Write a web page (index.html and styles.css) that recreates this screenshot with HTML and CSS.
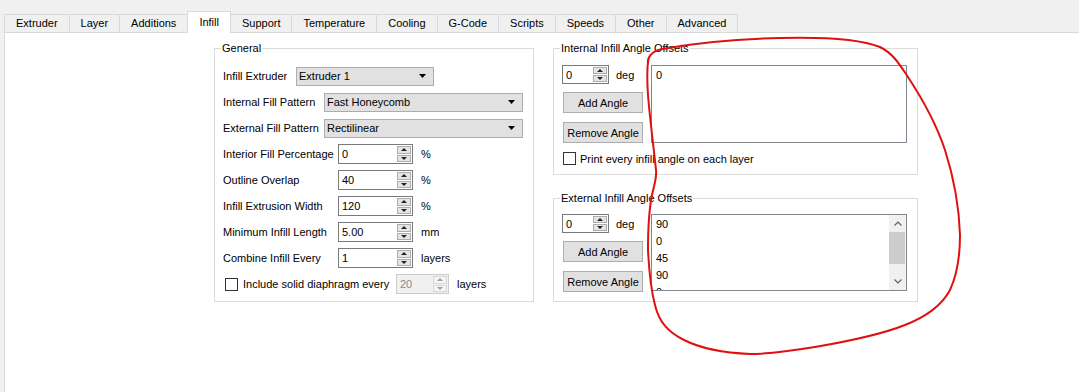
FILE: index.html
```html
<!DOCTYPE html>
<html lang="en">
<head>
  <meta charset="UTF-8">
  <title>Infill</title>
  <link rel="stylesheet" href="styles.css">
</head>
<body>
  <div class="tabbar">
    <div class="tab">Extruder</div>
    <div class="tab">Layer</div>
    <div class="tab">Additions</div>
    <div class="tab active">Infill</div>
    <div class="tab">Support</div>
    <div class="tab">Temperature</div>
    <div class="tab">Cooling</div>
    <div class="tab">G-Code</div>
    <div class="tab">Scripts</div>
    <div class="tab">Speeds</div>
    <div class="tab">Other</div>
    <div class="tab">Advanced</div>
  </div>

  <div class="pane">
    <!-- General -->
    <div class="group general">
      <div class="group-title">General</div>
      <div class="rows">
        <div class="row">
          <span class="lbl lbl-a">Infill Extruder</span>
          <div class="combo combo-s">Extruder 1<svg class="caret" width="7" height="4"><path d="M0 0h7l-3.5 4z"/></svg></div>
        </div>
        <div class="row">
          <span class="lbl lbl-b">Internal Fill Pattern</span>
          <div class="combo combo-l">Fast Honeycomb<svg class="caret" width="7" height="4"><path d="M0 0h7l-3.5 4z"/></svg></div>
        </div>
        <div class="row">
          <span class="lbl lbl-b">External Fill Pattern</span>
          <div class="combo combo-l">Rectilinear<svg class="caret" width="7" height="4"><path d="M0 0h7l-3.5 4z"/></svg></div>
        </div>
        <div class="row">
          <span class="lbl lbl-c">Interior Fill Percentage</span>
          <div class="spin spin-w"><span class="spin-val">0</span><span class="spin-btns"><i class="up"></i><i class="dn"></i></span></div>
          <span class="unit">%</span>
        </div>
        <div class="row">
          <span class="lbl lbl-c">Outline Overlap</span>
          <div class="spin spin-w"><span class="spin-val">40</span><span class="spin-btns"><i class="up"></i><i class="dn"></i></span></div>
          <span class="unit">%</span>
        </div>
        <div class="row">
          <span class="lbl lbl-c">Infill Extrusion Width</span>
          <div class="spin spin-w"><span class="spin-val">120</span><span class="spin-btns"><i class="up"></i><i class="dn"></i></span></div>
          <span class="unit">%</span>
        </div>
        <div class="row">
          <span class="lbl lbl-c">Minimum Infill Length</span>
          <div class="spin spin-w"><span class="spin-val">5.00</span><span class="spin-btns"><i class="up"></i><i class="dn"></i></span></div>
          <span class="unit">mm</span>
        </div>
        <div class="row">
          <span class="lbl lbl-c">Combine Infill Every</span>
          <div class="spin spin-w"><span class="spin-val">1</span><span class="spin-btns"><i class="up"></i><i class="dn"></i></span></div>
          <span class="unit">layers</span>
        </div>
        <div class="row">
          <span class="check"></span>
          <span class="lbl lbl-d">Include solid diaphragm every</span>
          <div class="spin spin-d disabled"><span class="spin-val">20</span><span class="spin-btns"><i class="up"></i><i class="dn"></i></span></div>
          <span class="unit">layers</span>
        </div>
      </div>
    </div>

    <div class="col">
      <!-- Internal -->
      <div class="group internal">
        <div class="group-title">Internal Infill Angle Offsets</div>
        <div class="angles">
          <div class="angle-ctrl">
            <div class="deg-row">
              <div class="spin spin-a"><span class="spin-val">0</span><span class="spin-btns"><i class="up"></i><i class="dn"></i></span></div>
              <span class="unit">deg</span>
            </div>
            <div class="btn btn-first">Add Angle</div>
            <div class="btn">Remove Angle</div>
          </div>
          <div class="list list-in">
            <div class="items"><div>0</div></div>
          </div>
        </div>
        <div class="check-row">
          <span class="check"></span>
          <span>Print every infill angle on each layer</span>
        </div>
      </div>

      <!-- External -->
      <div class="group external">
        <div class="group-title">External Infill Angle Offsets</div>
        <div class="angles">
          <div class="angle-ctrl">
            <div class="deg-row">
              <div class="spin spin-a"><span class="spin-val">0</span><span class="spin-btns"><i class="up"></i><i class="dn"></i></span></div>
              <span class="unit">deg</span>
            </div>
            <div class="btn btn-first">Add Angle</div>
            <div class="btn">Remove Angle</div>
          </div>
          <div class="list list-ex">
            <div class="items">
              <div>90</div>
              <div>0</div>
              <div>45</div>
              <div>90</div>
              <div>0</div>
            </div>
            <div class="sbar">
              <div class="sb-btn"><svg width="8" height="5"><path d="M0.5 4.5L4 1l3.5 3.5" fill="none" stroke="#606060" stroke-width="1.2"/></svg></div>
              <div class="sb-track"><div class="sb-thumb"></div></div>
              <div class="sb-btn"><svg width="8" height="5"><path d="M0.5 0.5L4 4l3.5-3.5" fill="none" stroke="#606060" stroke-width="1.2"/></svg></div>
            </div>
          </div>
        </div>
      </div>
    </div>
  </div>

  <!-- red marker scribble over the screenshot -->
  <svg class="scribble" width="1079" height="392" viewBox="0 0 1079 392">
    <path d="M648 64 C647 57 652 51 662 49 C690 44 730 39 780 38 C820 37 860 39 880 47 C892 53 898 62 906 74 C920 95 935 120 945 150 C953 175 959 205 960 235 C960 258 957 275 950 290 C942 305 928 316 905 325 C880 335 850 341 815 347 C790 351 770 354 750 354 C725 353 700 348 684 340 C668 332 659 322 655 305 C651 290 649 270 648 250 C648 230 649 210 652 195 C654 185 657 178 656 170 C654 150 650 120 648 95 C647 80 647 70 648 62"/>
  </svg>
</body>
</html>
```

FILE: styles.css
```css
*{
  margin: 0;
  padding: 0;
  box-sizing: border-box;
}

body{
  width: 1079px;
  height: 392px;
  overflow: hidden;
  background: #f0f0f0;
  font-family: "Liberation Sans", Arial, sans-serif;
  font-size: 11px;
  color: #000;
}

/* tabs */
.tabbar{
  height: 32px;
  display: flex;
  align-items: flex-end;
  padding-left: 4px;
}
.tab{
  height: 18px;
  line-height: 17px;
  padding: 0 11px;
  border: 1px solid #d9d9d9;
  border-bottom: none;
  margin-left: -1px;
  background: #f0f0f0;
}
.tab:first-child{
  margin-left: 0;
}
.tab.active{
  height: 22px;
  line-height: 20px;
  margin-bottom: -1px;
  background: #fff;
  position: relative;
  z-index: 1;
}

.pane{
  height: 360px;
  margin-left: 4px;
  border-top: 1px solid #d9d9d9;
  border-left: 1px solid #d9d9d9;
  background: #fff;
  display: flex;
  align-items: flex-start;
  padding: 15px 0 0 209px;
}

/* group boxes */
.group{
  border: 1px solid #dcdcdc;
  display: flex;
  flex-direction: column;
}
.group-title{
  align-self: flex-start;
  margin: -8px 0 0 6px;
  padding: 0 1px;
  line-height: 14px;
  background: #fff;
}
.general{
  width: 320px;
  height: 254px;
}
.rows{
  margin-top: 8px;
  padding-left: 8px;
}
.row{
  height: 26px;
  display: flex;
  align-items: center;
}
.lbl{
  flex: none;
  white-space: nowrap;
}
.lbl-a{ width: 73px; }
.lbl-b{ width: 101px; }
.lbl-c{ width: 115px; }
.lbl-d{ width: 153px; margin-left: 5px; }

.combo{
  height: 19px;
  border: 1px solid #adadad;
  background: #e1e1e1;
  display: flex;
  align-items: center;
  justify-content: space-between;
  padding: 0 7px 0 2px;
}
.combo-s{ width: 138px; }
.combo-l{ width: 199px; }
.caret path{ fill: #000; }

/* spin boxes */
.spin{
  height: 20px;
  border: 1px solid #7a7a7a;
  background: #fff;
  display: flex;
}
.spin-w{ width: 75px; }
.spin-d{ width: 53px; }
.spin-a{ width: 47px; height: 19px; }
.spin-val{
  flex: 1;
  padding-left: 3px;
  display: flex;
  align-items: center;
}
.spin-btns{
  width: 15px;
  display: flex;
  flex-direction: column;
  padding: 1px 1px 1px 0;
  gap: 1px;
}
.spin-btns i{
  flex: 1;
  border: 1px solid #adadad;
  background: #e5e5e5;
  display: flex;
  align-items: center;
  justify-content: center;
}
.spin-btns i:after{
  content: '';
  border-left: 3px solid transparent;
  border-right: 3px solid transparent;
}
.spin-btns .up:after{ border-bottom: 3px solid #222; }
.spin-btns .dn:after{ border-top: 3px solid #222; }

.spin.disabled{
  border-color: #ccc;
  background: #f0f0f0;
  color: #8a8a8a;
}
.spin.disabled i{
  border-color: #d9d9d9;
  background: #f4f4f4;
}
.spin.disabled .up:after{ border-bottom-color: #a0a0a0; }
.spin.disabled .dn:after{ border-top-color: #a0a0a0; }

.unit{
  margin-left: 8px;
}

.check{
  width: 13px;
  height: 13px;
  border: 1px solid #333;
  background: #fff;
  margin-left: 2px;
  flex: none;
}

/* right column */
.col{
  width: 365px;
  margin-left: 19px;
  display: flex;
  flex-direction: column;
}
.internal{
  height: 127px;
}
.external{
  height: 104px;
  margin-top: 23px;
}
.angles{
  display: flex;
  padding-left: 8px;
}
.internal .angles{ margin-top: 10px; }
.external .angles{ margin-top: 9px; }
.angle-ctrl{
  width: 89px;
  flex: none;
}
.deg-row{
  display: flex;
  align-items: center;
}
.deg-row .unit{ margin-left: 7px; }

.btn{
  width: 80px;
  height: 21px;
  margin: 9px 0 0 1px;
  border: 1px solid #adadad;
  background: #e1e1e1;
  display: flex;
  align-items: center;
  justify-content: center;
}
.btn-first{
  margin-top: 8px;
}

.list{
  width: 256px;
  border: 1px solid #828790;
  background: #fff;
  display: flex;
  overflow: hidden;
}
.list-in{ height: 78px; }
.list-ex{ height: 77px; }
.items{
  flex: 1;
  padding: 1px 0 0 4px;
  line-height: 17px;
}

.sbar{
  width: 17px;
  background: #f0f0f0;
  display: flex;
  flex-direction: column;
}
.sb-btn{
  height: 17px;
  display: flex;
  align-items: center;
  justify-content: center;
}
.sb-track{
  flex: 1;
  padding: 0 1px 0 0;
}
.sb-thumb{
  height: 32px;
  background: #cdcdcd;
}

.check-row{
  display: flex;
  align-items: center;
  margin: 9px 0 0 7px;
}
.check-row span + span{
  margin-left: 4px;
}

/* marker overlay */
.scribble{
  position: absolute;
  left: 0;
  top: 0;
  pointer-events: none;
}
.scribble path{
  fill: none;
  stroke: #e01010;
  stroke-width: 2;
  stroke-linecap: round;
}
```
